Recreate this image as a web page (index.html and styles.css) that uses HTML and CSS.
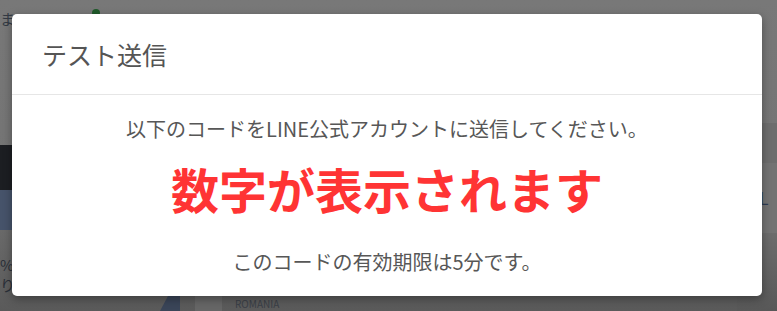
FILE: index.html
```html
<!DOCTYPE html>
<html lang="ja">
<head>
<meta charset="utf-8">
<title>テスト送信</title>
<link rel="stylesheet" href="styles.css">
</head>
<body>
<div class="page">
  <div class="col-left">
    <div class="lb lb-top"><span class="bgtext">ま</span></div>
    <div class="lb lb-dark"></div>
    <div class="lb lb-blue"></div>
    <div class="lb lb-bottom"><span class="bgtext">%</span><span class="bgtext">りし</span></div>
  </div>
  <div class="col-mid">
    <div class="mid-top"><span class="dot"></span></div>
    <div class="mid-bottom"><span class="shape"></span><span class="cell"></span><span class="bgtext small">ROMANIA</span></div>
  </div>
  <div class="col-right">
    <div class="rb rb-a"></div>
    <div class="rb rb-b"></div>
    <div class="rb rb-d"><span class="bgtext">UL</span></div>
    <div class="rb rb-e"></div>
  </div>
</div>

<div class="modal">
  <div class="modal-header">
    <h1 class="modal-title">テスト送信</h1>
  </div>
  <div class="modal-body">
    <p class="msg msg-top">以下のコードをLINE公式アカウントに送信してください。</p>
    <p class="code">数字が表示されます</p>
    <p class="msg msg-bottom">このコードの有効期限は5分です。</p>
  </div>
</div>
</body>
</html>
```
FILE: styles.css
```css
html, body {
  margin: 0;
  padding: 0;
}
body {
  width: 777px;
  height: 311px;
  overflow: hidden;
  position: relative;
  font-family: "Noto Sans CJK JP", "Noto Sans", sans-serif;
  background: linear-gradient(#787878 0%, #747474 55%, #5a5a5a 100%);
}
.page {
  display: flex;
  height: 311px;
}
.col-left {
  width: 40px;
  display: flex;
  flex-direction: column;
}
.lb-top { height: 145px; }
.lb-dark { height: 45px; background: #1c1e22; }
.lb-blue { height: 40px; background: #46536a; }
.lb-bottom {
  flex: 1;
  display: flex;
  flex-direction: column;
  padding-top: 26px;
  gap: 2px;
}
.bgtext {
  color: #2a2f38;
  font-size: 15px;
  line-height: 18px;
}
.lb-top .bgtext {
  display: block;
  margin-top: 10px;
  color: #333a44;
}
.col-mid {
  flex: 1;
  display: flex;
  flex-direction: column;
  justify-content: space-between;
}
.mid-top { height: 14px; }
.dot {
  display: block;
  width: 8px;
  height: 8px;
  border-radius: 50%;
  background: #1f5a2a;
  margin-left: 52px;
  margin-top: 9px;
}
.mid-bottom {
  height: 15px;
  display: flex;
  align-items: flex-start;
}
.shape {
  width: 20px;
  height: 15px;
  background: #3a4558;
  margin-left: 120px;
  clip-path: polygon(40% 0, 100% 0, 100% 100%, 0 100%);
}
.cell {
  width: 27px;
  height: 15px;
  background: #666;
  margin-left: 15px;
}
.small {
  font-size: 10px;
  line-height: 12px;
  margin-left: 13px;
  margin-top: 2px;
  color: #3a3f47;
}
.col-right {
  width: 40px;
  display: flex;
  flex-direction: column;
}
.rb-a { height: 123px; }
.rb-b { height: 40px; background: #6d6d6d; }
.rb-d { height: 70px; background: #737373; display: flex; align-items: center; padding-left: 10px; }
.rb-d .bgtext { color: #2e3b52; font-size: 17px; }
.rb-e { flex: 1; background: linear-gradient(#6c6c6c, #585858); }

.modal {
  position: absolute;
  left: 12px;
  top: 14px;
  width: 750px;
  height: 282px;
  background: #fff;
  border-radius: 5px;
  box-shadow: 0 3px 10px rgba(0, 0, 0, 0.35);
  display: flex;
  flex-direction: column;
}
.modal-header {
  height: 80px;
  border-bottom: 1px solid #e6e6e6;
  display: flex;
  align-items: center;
  padding-left: 30px;
}
.modal-title {
  margin: 0;
  font-size: 25px;
  font-weight: 400;
  color: #555;
  line-height: 30px;
}
.modal-body {
  display: flex;
  flex-direction: column;
  align-items: center;
}
.msg {
  margin: 0;
  font-size: 20px;
  line-height: 28px;
  color: #575757;
}
.msg-top { margin-top: 20px; }
.code {
  margin: 15px 0 0;
  font-size: 48px;
  line-height: 60px;
  font-weight: 700;
  color: #ff3434;
}
.msg-bottom { margin-top: 30px; }
```
